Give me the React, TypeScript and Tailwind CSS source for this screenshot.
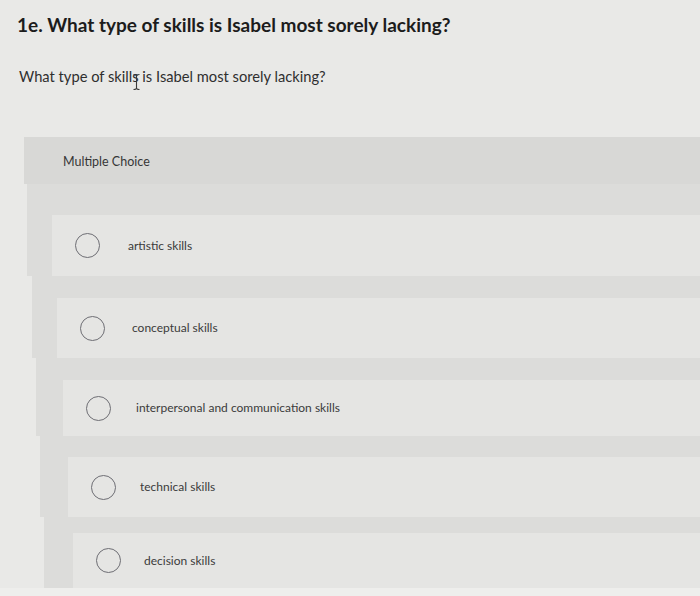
const options = [
  { label: 'artistic skills', panel: 'ml-[3px]', card: 'ml-[25px] h-[61px]', gap: 'pt-[31px]', text: 'ml-[28px]' },
  { label: 'conceptual skills', panel: 'ml-[8px]', card: 'ml-[25px] h-[60px]', gap: 'pt-[22px]', text: 'ml-[27px]' },
  { label: 'interpersonal and communication skills', panel: 'ml-[12px]', card: 'ml-[27px] h-[56px]', gap: 'pt-[22px]', text: 'ml-[25px]' },
  { label: 'technical skills', panel: 'ml-[16px]', card: 'ml-[28px] h-[60px]', gap: 'pt-[21px]', text: 'ml-[24px]' },
  { label: 'decision skills', panel: 'ml-[20px]', card: 'ml-[29px] h-[55px]', gap: 'pt-[16px]', text: 'ml-[23px]' },
];

function Radio() {
  return (
    <span className="ml-[23px] block h-[25px] w-[25px] shrink-0 rounded-full border-[1.5px] border-[#6e6e74]" />
  );
}

export default function App() {
  return (
    <div className="relative h-[596px] w-[700px] overflow-hidden bg-[#e9e9e7] font-['Lato',sans-serif]">
      {/* Title */}
      <h1 className="pl-[17px] pt-[13px] text-[19px] font-bold leading-[24px] text-[#1c1c1c]">
        1e. What type of skills is Isabel most sorely lacking?
      </h1>

      {/* Question */}
      <p className="mt-[29px] pl-[19px] text-[14.7px] leading-[20px] text-[#2f2f2f]">
        What type of skills is Isabel most sorely lacking?
      </p>

      {/* text cursor */}
      <svg className="absolute left-[132px] top-[73px]" width="9" height="18" viewBox="0 0 9 18">
        <path d="M1.5 1.5 Q4.5 1.5 4.5 3.5 Q4.5 1.5 7.5 1.5 M4.5 3.5 V15 M1.5 16.5 Q4.5 16.5 4.5 15 Q4.5 16.5 7.5 16.5" fill="none" stroke="#3a3a3a" strokeWidth="1.1" />
      </svg>

      {/* Answer panel */}
      <div className="mt-[51px]">
        <div className="ml-[24px] flex h-[47px] items-center bg-[#d8d8d6] pl-[39px] pt-[3px] text-[12.5px] text-[#363636]">
          Multiple Choice
        </div>

        <div className="ml-[24px]">
          {options.map((o) => (
            <div key={o.label} className={`${o.panel} ${o.gap} bg-[#dcdcda]`}>
              <div className={`${o.card} flex items-center bg-[#e5e5e3]`}>
                <Radio />
                <span className={`${o.text} text-[12px] text-[#3b3b3b]`}>{o.label}</span>
              </div>
            </div>
          ))}
        </div>

        <div className="h-[8px] bg-[#eeeeec]" />
      </div>
    </div>
  );
}
